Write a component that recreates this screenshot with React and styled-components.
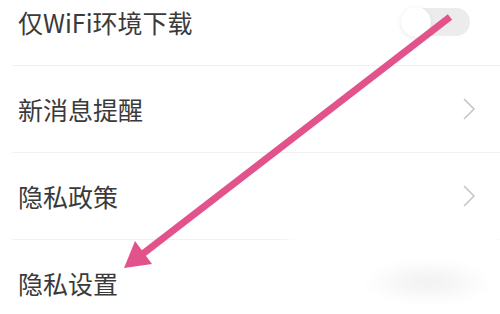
import React from "react";
import styled, { createGlobalStyle } from "styled-components";

const Global = createGlobalStyle`
  html, body { margin: 0; padding: 0; background: #ffffff; }
  body { width: 500px; height: 314px; overflow: hidden; }
  #root { width: 500px; height: 314px; }
`;

const Page = styled.div`
  position: relative;
  width: 500px;
  height: 314px;
  overflow: hidden;
  background: #ffffff;
  font-family: "Noto Sans CJK SC", "Noto Sans", sans-serif;
`;

const List = styled.div`
  display: flex;
  flex-direction: column;
  margin-top: -21px;
`;

const Row = styled.div`
  display: flex;
  align-items: center;
  justify-content: space-between;
  height: 86px;
  padding: 0 ${(p) => p.$pr}px 0 18px;
  position: relative;
  &::after {
    content: "";
    display: ${(p) => (p.$divider ? "block" : "none")};
    position: absolute;
    left: 12px;
    right: 0;
    bottom: -1px;
    height: 1px;
    background: #f1f1f1;
  }
  & + & {
    margin-top: 1px;
  }
`;

const Label = styled.span`
  font-size: 25px;
  line-height: 1;
  color: #3a3a3a;
  letter-spacing: 0;
  padding-top: 1px;
`;

const Track = styled.div`
  position: relative;
  width: 68px;
  height: 28px;
  border-radius: 14px;
  background: #ececec;
`;

const Knob = styled.div`
  position: absolute;
  left: -1px;
  top: -1px;
  width: 30px;
  height: 30px;
  border-radius: 50%;
  background: #ffffff;
  box-shadow: 0 1px 4px rgba(0, 0, 0, 0.1);
`;

const Smudge = styled.div`
  position: absolute;
  left: 288px;
  top: 234px;
  width: 212px;
  height: 80px;
  background: radial-gradient(
    ellipse 64px 22px at 140px 48px,
    rgba(240, 240, 240, 1) 0%,
    rgba(248, 248, 248, 1) 55%,
    rgba(255, 255, 255, 1) 100%
  );
  filter: blur(4px);
`;

const Overlay = styled.svg`
  position: absolute;
  left: 0;
  top: 0;
  pointer-events: none;
`;

const Chevron = () => (
  <svg width="14" height="24" viewBox="0 0 14 24">
    <path d="M2 2 L12 12 L2 22" fill="none" stroke="#c4c4c4" strokeWidth="1.5" />
  </svg>
);

const rows = [
  { label: "仅WiFi环境下载", kind: "toggle", divider: true },
  { label: "新消息提醒", kind: "chevron", divider: true },
  { label: "隐私政策", kind: "chevron", divider: true },
  { label: "隐私设置", kind: "none", divider: false },
];

export default function App() {
  return (
    <Page>
      <Global />
      <List>
        {rows.map((r) => (
          <Row key={r.label} $divider={r.divider} $pr={r.kind === "toggle" ? 30 : 24}>
            <Label>{r.label}</Label>
            {r.kind === "toggle" && (
              <Track>
                <Knob />
              </Track>
            )}
            {r.kind === "chevron" && <Chevron />}
          </Row>
        ))}
      </List>
      <Smudge />
      <Overlay width="500" height="314" viewBox="0 0 500 314">
        <line x1="450" y1="17" x2="140" y2="256" stroke="#e2528b" strokeWidth="7" />
        <polygon points="124,268 135,241 152,264" fill="#e2528b" />
      </Overlay>
    </Page>
  );
}
